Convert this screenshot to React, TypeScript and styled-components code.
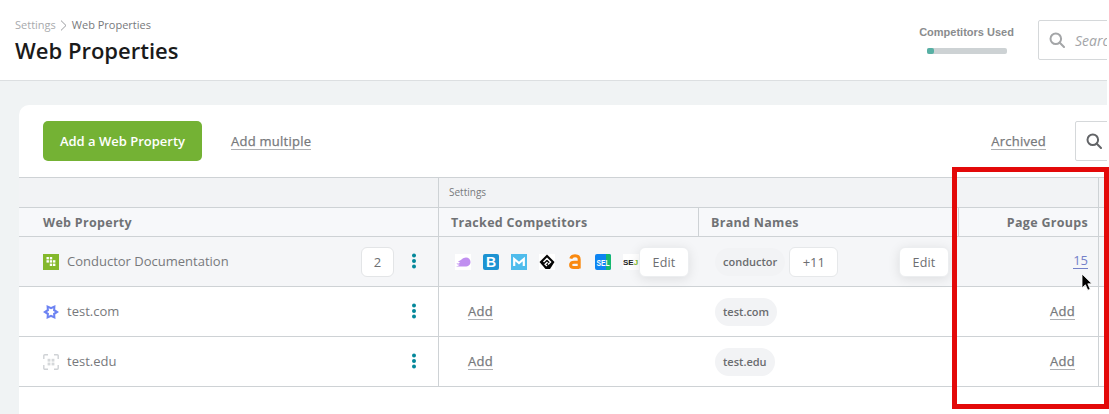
import React from "react";
import styled, { createGlobalStyle } from "styled-components";

const Global = createGlobalStyle`
  html, body { margin: 0; padding: 0; background: #fff; }
  body { font-family: "Open Sans", "Liberation Sans", sans-serif; }
  * { box-sizing: border-box; }
`;

const Viewport = styled.div`
  position: relative;
  width: 1109px;
  height: 414px;
  overflow: hidden;
  background: #fff;
`;
const Page = styled.div`
  width: 1107px;
  height: 414px;
  overflow: hidden;
  background: #f0f3f4;
`;
const TopBar = styled.header`
  height: 81px;
  background: #fff;
  border-bottom: 1px solid #dcdfe1;
  display: flex;
  justify-content: space-between;
  padding: 18px 0 0 15px;
  overflow: hidden;
`;
const Crumbs = styled.nav`
  display: flex;
  align-items: center;
  gap: 4px;
  height: 14px;
  font-size: 11px;
  line-height: 14px;
  color: #77797c;
`;
const CrumbRoot = styled.span`
  color: #a8aaad;
`;
const CrumbCurrent = styled.span`
  margin-left: 1px;
`;
const Title = styled.h1`
  margin: 3px 0 0;
  font-size: 22px;
  line-height: 30px;
  font-weight: 600;
  color: #1a1a1a;
`;
const TopRight = styled.div`
  display: flex;
  align-items: flex-start;
  gap: 24px;
  padding-top: 2px;
  margin-right: -11px;
`;
const Usage = styled.div`
  display: flex;
  flex-direction: column;
  align-items: center;
  width: 95px;
  padding-top: 5px;
`;
const UsageLabel = styled.div`
  font-family: "Liberation Sans", Arial, sans-serif;
  font-size: 11px;
  line-height: 14px;
  font-weight: 700;
  color: #8a8c8e;
  white-space: nowrap;
`;
const Track = styled.div`
  width: 80px;
  height: 6px;
  margin-top: 9px;
  border-radius: 2px;
  background: #cdd2d4;
`;
const TrackFill = styled.div`
  height: 6px;
  border-radius: 2px;
  background: #57b0a4;
`;
const SearchBox = styled.div<{ $w: number; $color: string }>`
  width: ${(p) => p.$w}px;
  height: 40px;
  display: flex;
  align-items: center;
  gap: 10px;
  padding-left: 10px;
  background: #fff;
  border: 1px solid #d5d8da;
  border-radius: 2px 0 0 2px;
  color: ${(p) => p.$color};
  flex-shrink: 0;
  overflow: hidden;
  svg {
    flex-shrink: 0;
  }
`;
const Placeholder = styled.span`
  font-size: 14px;
  font-style: italic;
  color: #a3a5a8;
  white-space: nowrap;
`;
const Card = styled.section`
  margin: 24px 0 0 19px;
  height: 320px;
  background: #fff;
  border-radius: 10px 0 0 0;
`;
const Toolbar = styled.div`
  height: 72px;
  display: flex;
  align-items: center;
  padding: 0 0 0 24px;
  overflow: hidden;
`;
const PrimaryButton = styled.button`
  width: 159px;
  height: 40px;
  border: 0;
  border-radius: 5px;
  background: #74b234;
  color: #fff;
  font-family: inherit;
  font-size: 13px;
  font-weight: 600;
`;
const TextLink = styled.a`
  display: inline-block;
  font-size: 13px;
  line-height: 16px;
  font-weight: 400;
  letter-spacing: 0.25px;
  -webkit-text-stroke: 0.25px currentColor;
  color: #77797c;
  border-bottom: 1px solid #aeb0b3;
`;
const AddMultiple = styled(TextLink)`
  margin-left: 29px;
`;
const Spacer = styled.div`
  flex: 1;
`;
const Archived = styled(TextLink)`
  margin-right: 29px;
`;
const ToolbarSearch = styled(SearchBox)`
  margin-right: -10px;
`;
const Table = styled.div`
  border-top: 1px solid #ced2d5;
`;
const Row = styled.div<{ $h: number; $bg: string }>`
  display: grid;
  grid-template-columns: 420px 260px 260px 140px 1fr;
  height: ${(p) => p.$h}px;
  background: ${(p) => p.$bg};
  border-bottom: 1px solid #ced2d5;
`;
const Cell = styled.div<{ $line?: boolean; $pad?: number; $right?: boolean }>`
  position: relative;
  display: flex;
  align-items: center;
  min-width: 0;
  padding-left: ${(p) => p.$pad ?? 0}px;
  justify-content: ${(p) => (p.$right ? "flex-end" : "flex-start")};
  border-right: ${(p) => (p.$line ? "1px solid #ced2d5" : "0")};
`;
const GroupLabel = styled.span`
  font-size: 10px;
  color: #77797c;
  margin-bottom: 2px;
`;
const HeadLabel = styled.span`
  font-size: 12.5px;
  font-weight: 700;
  color: #707275;
  letter-spacing: 0.3px;
`;
const PageGroupsLabel = styled(HeadLabel)`
  margin-right: 10px;
`;
const PropertyIcon = styled.span`
  display: flex;
  width: 16px;
  height: 16px;
  margin-right: 8px;
`;
const PropertyName = styled.span`
  flex: 1;
  font-size: 13px;
  color: #77797c;
  padding-bottom: 2px;
`;
const CountBox = styled.span`
  display: flex;
  align-items: center;
  justify-content: center;
  width: 33px;
  height: 30px;
  margin-right: 14.5px;
  background: #fff;
  border: 1px solid #e3e5e7;
  border-radius: 6px;
  font-size: 13px;
  color: #6d6e71;
`;
const Kebab = styled.span`
  display: flex;
  width: 10px;
  height: 16px;
  margin-right: 19.5px;
  margin-bottom: 1px;
`;
const Icons = styled.div`
  display: flex;
  gap: 12px;
  overflow: hidden;
`;
const CompetitorTile = styled.span`
  display: flex;
  flex: none;
  width: 16px;
  height: 16px;
`;
const FloatingEdit = styled.button<{ $w: number; $right: number }>`
  position: absolute;
  top: 10px;
  right: ${(p) => p.$right}px;
  width: ${(p) => p.$w}px;
  height: 30px;
  background: #fff;
  border: 1px solid #eceef0;
  border-radius: 6px;
  box-shadow: 0 2px 12px rgba(0, 0, 0, 0.1);
  font-family: inherit;
  font-size: 12.5px;
  color: #6d6e71;
  letter-spacing: 0.2px;
`;
const Pill = styled.span`
  display: inline-flex;
  align-items: center;
  height: 28px;
  padding: 0 8px;
  background: #f2f3f5;
  border-radius: 14px;
  font-size: 11px;
  font-weight: 600;
  color: #6a6c6f;
`;
const MoreBox = styled.span`
  display: flex;
  align-items: center;
  justify-content: center;
  width: 49px;
  height: 30px;
  margin-left: 4px;
  background: #fff;
  border: 1px solid #e6e8ea;
  border-radius: 6px;
  font-size: 13px;
  color: #6d6e71;
`;
const PageCount = styled.a`
  margin-right: 10px;
  margin-bottom: 1px;
  font-size: 13px;
  line-height: 15px;
  color: #7380c8;
  border-bottom: 1px solid #7380c8;
`;
const PageAdd = styled(TextLink)`
  margin-right: 23px;
`;
const Annotation = styled.div`
  position: absolute;
  left: 952px;
  top: 167px;
  width: 157px;
  height: 242px;
  border: 5px solid #e30909;
  pointer-events: none;
`;
const Cursor = styled.svg`
  position: absolute;
  left: 1081px;
  top: 273px;
  width: 13px;
  height: 19px;
`;

const Mag = ({ size, sw }: { size: number; sw: number }) => (
  <svg width={size} height={size} viewBox="0 0 16 16" fill="none" stroke="currentColor" strokeWidth={sw} strokeLinecap="round">
    <circle cx="6.8" cy="6.8" r="5.3" />
    <path d="M10.8 10.8 15 15" />
  </svg>
);

const Chevron = () => (
  <svg width="7" height="11" viewBox="0 0 7 11" fill="none" stroke="#9a9c9f" strokeWidth="1">
    <path d="M1 .6 6 5.500 1 10.400" />
  </svg>
);

const Dots = () => (
  <svg width="10" height="16" viewBox="0 0 10 16" fill="#04889a">
    <circle cx="5" cy="2.500" r="2" />
    <circle cx="5" cy="8" r="2" />
    <circle cx="5" cy="13.500" r="2" />
  </svg>
);

const GreenLogo = () => (
  <svg width="16" height="16" viewBox="0 0 16 16">
    <rect width="16" height="16" fill="#84b82c" />
    <g fill="#fff">
      <rect x="3.500" y="3" width="2.400" height="2.400" />
      <rect x="6.800" y="3" width="2.400" height="2.400" />
      <rect x="3.500" y="6.200" width="2.400" height="2.400" />
      <rect x="6.800" y="6.200" width="2.400" height="2.400" />
      <rect x="10" y="6.200" width="2.400" height="2.400" />
      <rect x="6.800" y="9.600" width="2.400" height="2.400" />
      <rect x="10" y="9.600" width="2.400" height="2.400" />
    </g>
  </svg>
);

const StarLogo = () => (
  <svg width="16" height="16" viewBox="0 0 16 16">
    <path
      fill="#6d83f2"
      fillRule="evenodd"
      d="M16 8 12.200 5.600 12.500 1 8 3 3.500 1 3.800 5.600 0 8 3.800 10.400 3.500 15 8 13 12.500 15 12.200 10.400zM12 8 10 9.200 10.300 11.800 8 10.700 5.700 11.800 6 9.200 4 8 6 6.800 5.700 4.200 8 5.300 10.300 4.200 10 6.800z"
    />
  </svg>
);

const EduLogo = () => (
  <svg width="16" height="16" viewBox="0 0 16 16" fill="none">
    <path stroke="#cfd2d5" strokeWidth="1.400" d="M5 .8H1.800a1 1 0 0 0-1 1V5M11 .8h3.200a1 1 0 0 1 1 1V5M5 15.200H1.800a1 1 0 0 1-1-1V11M11 15.200h3.200a1 1 0 0 0 1-1V11" />
    <g fill="#d5d8da">
      <rect x="4.600" y="4.800" width="2.800" height="2.800" />
      <rect x="8.600" y="4.800" width="2.800" height="2.800" />
      <rect x="4.600" y="8.600" width="2.800" height="2.800" />
      <rect x="8.600" y="8.600" width="2.800" height="2.800" />
    </g>
  </svg>
);

const logoText = { fontFamily: "'Liberation Sans', Arial, sans-serif", fontWeight: 700 } as const;

const Competitors = [
  <svg key="a" width="16" height="16" viewBox="0 0 16 16">
    <rect width="16" height="16" fill="#fff" />
    <path fill="#c08ff0" d="M.5 12.500c2-.2 3.400-1 4.400-1.800-1 0-2.400-.2-3.600-1 1.800 0 3-.4 4-1.200-.8-.1-1.600-.3-2.400-.9C6 7 7.600 3.600 11 3.600c2.600 0 4.500 1.900 4.500 4.400 0 2.800-2.400 4.600-5.200 4.600-3.400 0-6.400-.4-9.800-.1z" />
  </svg>,
  <svg key="b" width="16" height="16" viewBox="0 0 16 16">
    <rect width="16" height="16" rx="2" fill="#1d93d2" />
    <text x="8" y="13.200" textAnchor="middle" fontSize="14" fill="#fff" style={logoText}>B</text>
  </svg>,
  <svg key="m" width="16" height="16" viewBox="0 0 16 16">
    <rect width="16" height="16" fill="#4fbcec" />
    <path fill="none" stroke="#fff" strokeWidth="2.200" d="M3.200 12V5l4.800 4 4.800-4v7" />
  </svg>,
  <svg key="k" width="16" height="16" viewBox="0 0 16 16">
    <rect width="16" height="16" fill="#fff" />
    <path fill="#050505" d="M8 .5 15.500 8l-4.500 7H6.500L3.500 11.500.5 8z" />
    <path fill="none" stroke="#fff" strokeWidth="1.500" d="M4.500 8 8 4.500 11.500 8 9 10.500M8.500 8 6.200 10.300 8 12" />
  </svg>,
  <svg key="a2" width="16" height="16" viewBox="0 0 16 16">
    <path fill="none" stroke="#f9890f" strokeWidth="3" d="M3.800 4.600C4.400 2.400 6 1.800 8 1.800c3 0 4.200 1.400 4.200 3.800V14.400M12.200 8.200H7.200c-2.400 0-3.600 1-3.600 2.800s1.200 2.600 3.200 2.600h5.400" />
  </svg>,
  <svg key="s" width="16" height="16" viewBox="0 0 16 16">
    <rect width="16" height="16" rx="2" fill="#0d84f2" />
    <path d="M11 0h3a2 2 0 0 1 2 2v12a2 2 0 0 1-2 2h-3z" fill="#14b86f" />
    <text x="8" y="12" textAnchor="middle" fontSize="8.500" textLength="13" lengthAdjust="spacingAndGlyphs" fill="#fff" style={logoText}>SEL</text>
  </svg>,
  <svg key="j" width="16" height="16" viewBox="0 0 16 16">
    <rect width="16" height="16" fill="#fff" />
    <text x="0" y="11.400" fontSize="8" fill="#222" style={logoText}>SE</text>
    <text x="10.800" y="11.400" fontSize="8" fill="#7dbb2d" style={logoText}>J</text>
  </svg>,
];

const PropertyCell = ({ icon, name, count }: { icon: React.ReactNode; name: string; count?: number }) => (
  <Cell $line $pad={24}>
    <PropertyIcon>{icon}</PropertyIcon>
    <PropertyName>{name}</PropertyName>
    {count !== undefined && <CountBox>{count}</CountBox>}
    <Kebab><Dots /></Kebab>
  </Cell>
);

const PlainRow = ({ icon, name, brand }: { icon: React.ReactNode; name: string; brand: string }) => (
  <Row $h={50} $bg="#fff">
    <PropertyCell icon={icon} name={name} />
    <Cell $pad={29}>
      <TextLink>Add</TextLink>
    </Cell>
    <Cell $pad={16}>
      <Pill>{brand}</Pill>
    </Cell>
    <Cell $line $right>
      <PageAdd>Add</PageAdd>
    </Cell>
    <Cell />
  </Row>
);

export default function App() {
  return (
    <>
      <Global />
      <Viewport>
        <Page>
          <TopBar>
            <div>
              <Crumbs>
                <CrumbRoot>Settings</CrumbRoot>
                <Chevron />
                <CrumbCurrent>Web Properties</CrumbCurrent>
              </Crumbs>
              <Title>Web Properties</Title>
            </div>
            <TopRight>
              <Usage>
                <UsageLabel>Competitors Used</UsageLabel>
                <Track>
                  <TrackFill style={{ width: "9%" }} />
                </Track>
              </Usage>
              <SearchBox $w={80} $color="#a4a6a8">
                <Mag size={16} sw={2} />
                <Placeholder>Search</Placeholder>
              </SearchBox>
            </TopRight>
          </TopBar>
          <Card>
            <Toolbar>
              <PrimaryButton>Add a Web Property</PrimaryButton>
              <AddMultiple>Add multiple</AddMultiple>
              <Spacer />
              <Archived>Archived</Archived>
              <ToolbarSearch $w={42} $color="#636568">
                <Mag size={16} sw={2} />
              </ToolbarSearch>
            </Toolbar>
            <Table>
              <Row $h={30} $bg="#f2f3f5">
                <Cell $line />
                <Cell $pad={10}>
                  <GroupLabel>Settings</GroupLabel>
                </Cell>
                <Cell />
                <Cell $line />
                <Cell />
              </Row>
              <Row $h={29} $bg="#f7f8fa">
                <Cell $line $pad={24}>
                  <HeadLabel>Web Property</HeadLabel>
                </Cell>
                <Cell $line $pad={12}>
                  <HeadLabel>Tracked Competitors</HeadLabel>
                </Cell>
                <Cell $line $pad={12}>
                  <HeadLabel>Brand Names</HeadLabel>
                </Cell>
                <Cell $line $right>
                  <PageGroupsLabel>Page Groups</PageGroupsLabel>
                </Cell>
                <Cell />
              </Row>
              <Row $h={50} $bg="#f5f6f8">
                <PropertyCell icon={<GreenLogo />} name="Conductor Documentation" count={2} />
                <Cell $pad={16}>
                  <Icons>
                    {Competitors.map((c) => (
                      <CompetitorTile key={c.key}>{c}</CompetitorTile>
                    ))}
                  </Icons>
                  <FloatingEdit $w={50} $right={10}>Edit</FloatingEdit>
                </Cell>
                <Cell $pad={16}>
                  <Pill>conductor</Pill>
                  <MoreBox>+11</MoreBox>
                  <FloatingEdit $w={50} $right={10}>Edit</FloatingEdit>
                </Cell>
                <Cell $line $right>
                  <PageCount>15</PageCount>
                </Cell>
                <Cell />
              </Row>
              <PlainRow icon={<StarLogo />} name="test.com" brand="test.com" />
              <PlainRow icon={<EduLogo />} name="test.edu" brand="test.edu" />
            </Table>
          </Card>
        </Page>
        <Annotation />
        <Cursor viewBox="0 0 13 19">
          <path d="M1 1v14l3.400-3.200 2.400 5.400 2.400-1-2.400-5.400H11z" fill="#000" stroke="#fff" strokeWidth="0.8" />
        </Cursor>
      </Viewport>
    </>
  );
}
